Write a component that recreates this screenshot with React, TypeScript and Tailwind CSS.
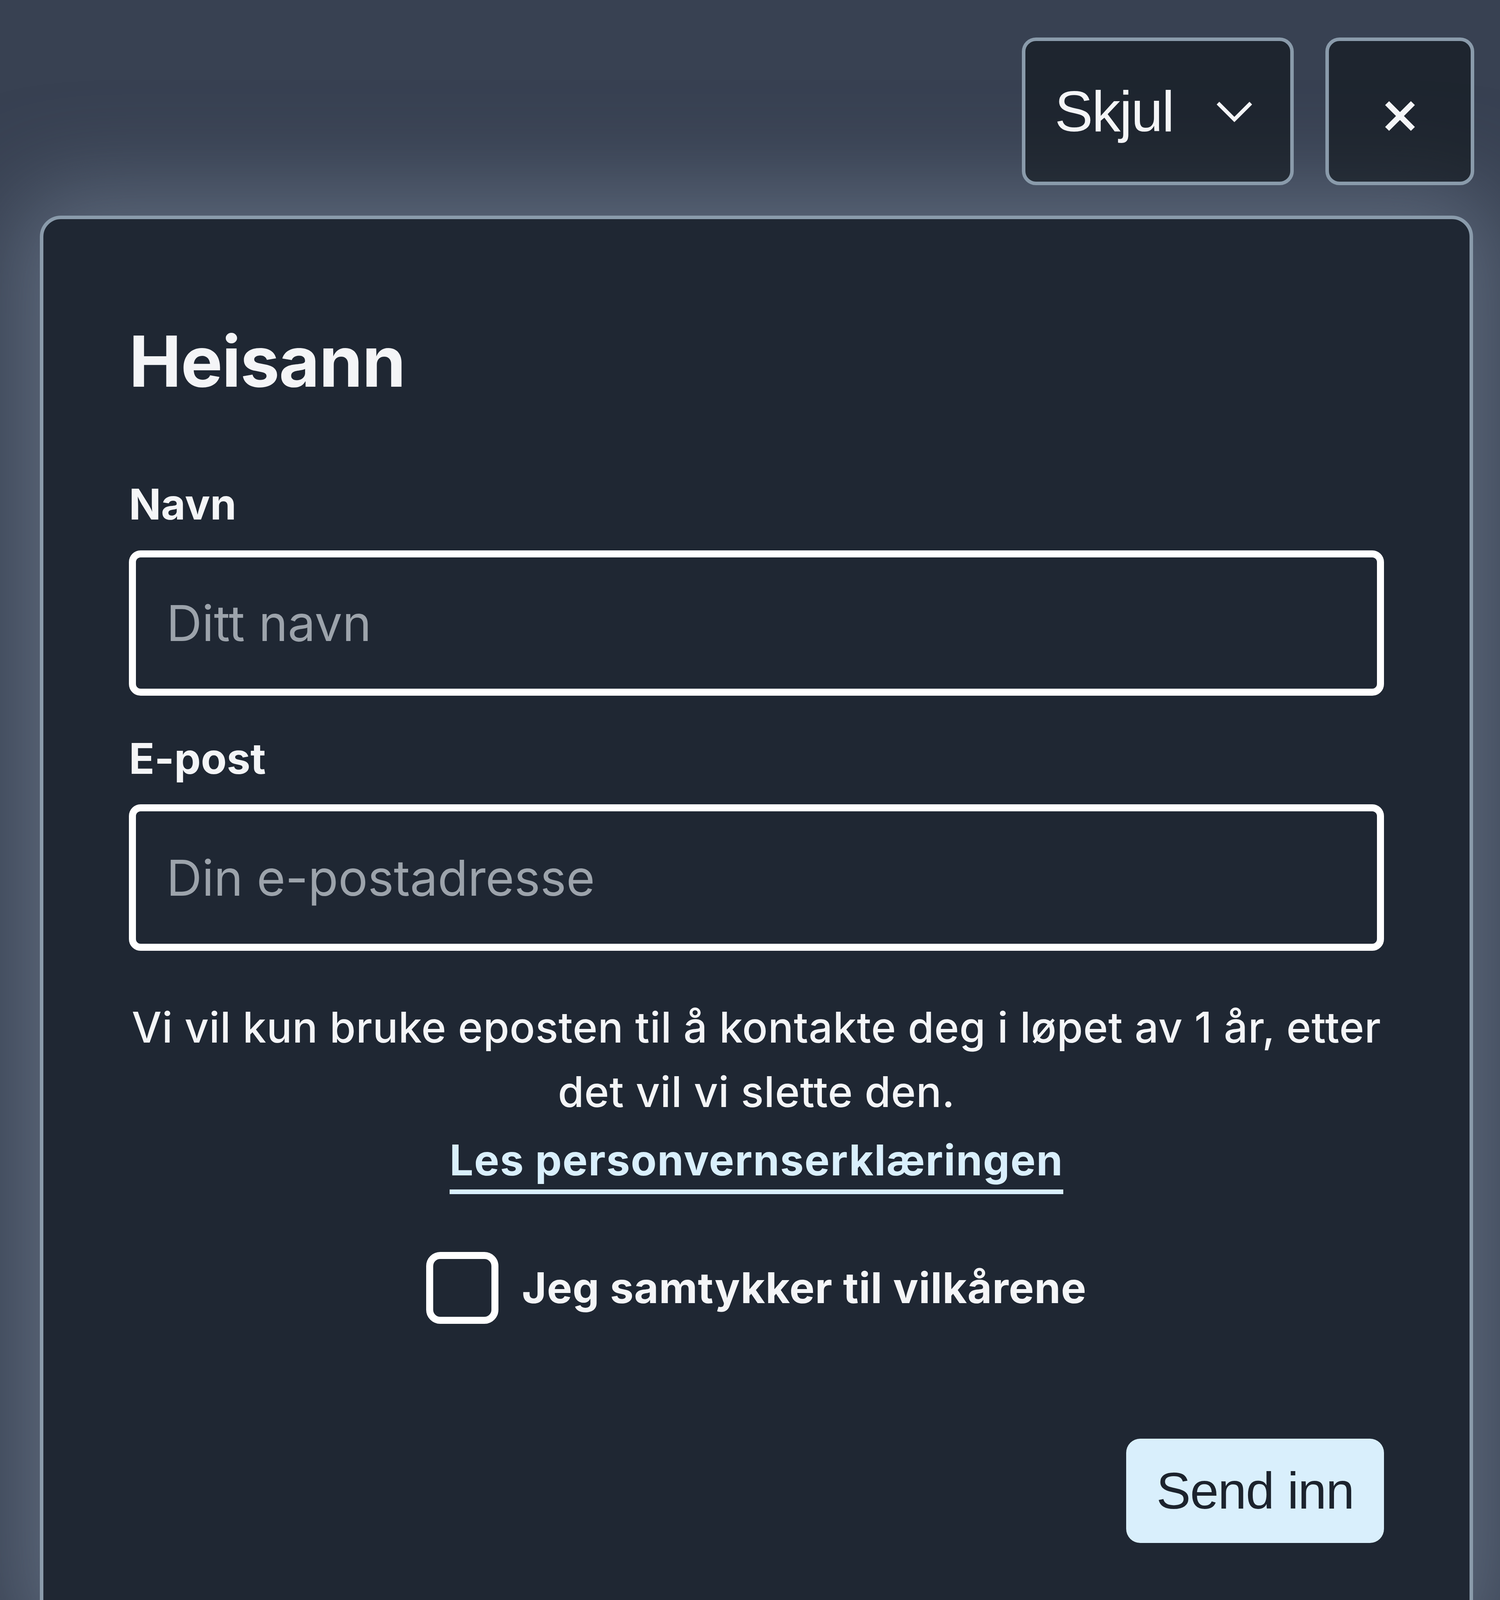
import React from "react";

export default function App() {
  return (
    <div className="[zoom:6] w-[640px] h-[712px] overflow-hidden bg-[#384152] font-['Inter',sans-serif] text-[#f4f5f7]">
      <div className="flex justify-end gap-[13.5px] pt-[16px] pr-[11px]">
        <button className="flex h-[63px] w-[116px] items-center rounded-[6px] border-[1.5px] border-[#8a9bab] bg-[#090e13]/55 pl-[12.5px] font-['Liberation_Sans',Arial,sans-serif] text-[24.5px] tracking-[-0.02em] text-[#f4f5f7]">
          <span>Skjul</span>
          <svg className="ml-[18px]" width="16" height="10" viewBox="0 0 16 10" fill="none">
            <polyline points="1,1.5 8,8.5 15,1.5" stroke="#f4f5f7" strokeWidth="1.6" />
          </svg>
        </button>
        <button className="flex h-[63px] w-[63.5px] items-center justify-center rounded-[6px] border-[1.5px] border-[#8a9bab] bg-[#090e13]/55">
          <svg className="translate-y-[2px]" width="13" height="13" viewBox="0 0 13 13" fill="none">
            <line x1="1" y1="1" x2="12" y2="12" stroke="#f4f5f7" strokeWidth="2.4" />
            <line x1="12" y1="1" x2="1" y2="12" stroke="#f4f5f7" strokeWidth="2.4" />
          </svg>
        </button>
      </div>

      <div className="ml-[17px] mt-[13px] h-[604px] w-[611.5px] rounded-[9px] border-[1.5px] border-[#8a9bab] bg-[#1f2733] px-[36.5px] pt-[42.6px] shadow-[0_0_40px_10px_rgba(125,140,160,0.55)]">
        <h2 className="text-[30px] font-bold leading-[36px] tracking-[-0.01em]">Heisann</h2>

        <label className="mt-[29px] block text-[18px] font-bold leading-[28px]">Navn</label>
        <input
          type="text"
          placeholder="Ditt navn"
          className="mt-[5.8px] block h-[62px] w-full rounded-[5px] border-[3px] border-white bg-transparent px-[13px] text-[21px] text-white outline-none placeholder:text-[#9ca3ab]"
        />

        <label className="mt-[12.8px] block text-[18px] font-bold leading-[28px]">E-post</label>
        <input
          type="email"
          placeholder="Din e-postadresse"
          className="mt-[5.5px] block h-[62.5px] w-full rounded-[5px] border-[3px] border-white bg-transparent px-[13px] text-[21px] text-white outline-none placeholder:text-[#9ca3ab]"
        />

        <p className="mt-[19px] text-center text-[18px] font-medium leading-[27.4px] tracking-[0.008em]">
          Vi vil kun bruke eposten til å kontakte deg i løpet av 1 år, etter det vil vi slette den.
        </p>
        <div className="mt-[3px] text-center">
          <a
            href="#"
            className="inline-block border-b-2 border-[#d9effc] text-[18px] font-bold leading-[25px] tracking-[0.018em] text-[#d9effc]"
          >
            Les personvernserklæringen
          </a>
        </div>

        <div className="mt-[24.6px] flex items-center justify-center gap-[10px]">
          <span className="block h-[30.8px] w-[30.8px] rounded-[6px] border-[3px] border-white" />
          <span className="text-[18px] font-bold leading-[28px] tracking-[0.01em]">Jeg samtykker til vilkårene</span>
        </div>

        <div className="mt-[48.9px] flex justify-end">
          <button className="h-[44.6px] w-[110px] rounded-[6px] bg-[#d9effc] font-['Liberation_Sans',Arial,sans-serif] text-[22px] tracking-[-0.015em] text-[#1c232d]">
            Send inn
          </button>
        </div>
      </div>
    </div>
  );
}
